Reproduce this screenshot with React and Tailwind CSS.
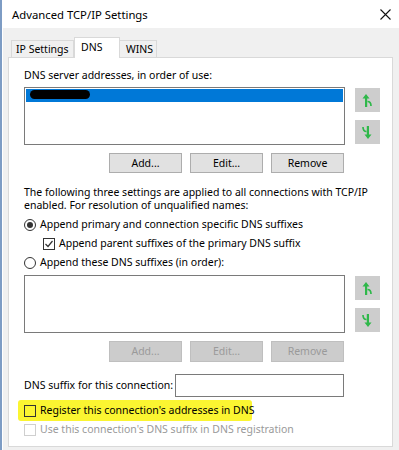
import React from "react";

const font = { fontFamily: '"Noto Sans", "Open Sans", sans-serif' };

function UpIcon() {
  return (
    <svg width="11" height="15" viewBox="0 0 11 15">
      <path d="M4 1 L0.5 5.5 H3 V14 H5.2 V5.5 H7.5 Z" fill="#2fb84a" />
      <path d="M5.5 8.5 Q9 8.5 9 13" stroke="#2fb84a" strokeWidth="1.7" fill="none" />
    </svg>
  );
}

function DownIcon() {
  return (
    <svg width="11" height="15" viewBox="0 0 11 15">
      <path d="M6 14 L2.5 9.5 H4.8 V1 H7 V9.5 H9.5 Z" fill="#2fb84a" />
      <path d="M4.5 6.5 Q1 6.5 1 2" stroke="#2fb84a" strokeWidth="1.7" fill="none" />
    </svg>
  );
}

function ArrowButtons() {
  return (
    <div className="flex flex-col gap-[8px] pt-[1px] shrink-0">
      <div className="w-[25px] h-[24px] bg-[#cdcdcd] flex items-center justify-center">
        <UpIcon />
      </div>
      <div className="w-[25px] h-[24px] bg-[#cdcdcd] flex items-center justify-center">
        <DownIcon />
      </div>
    </div>
  );
}

function Btn({ children, disabled }) {
  return (
    <div
      className={
        disabled
          ? "w-[73px] h-[21px] bg-[#cccccc] border border-[#bfbfbf] flex items-center justify-center text-[#9a9a9a] shrink-0"
          : "w-[73px] h-[20px] bg-[#e1e1e1] border border-[#adadad] flex items-center justify-center text-black shrink-0"
      }
    >
      {children}
    </div>
  );
}

export default function App() {
  return (
    <div
      className="w-[399px] h-[450px] overflow-hidden flex bg-[#f0f0f0] text-[10.5px] leading-[13px] text-black whitespace-nowrap"
      style={font}
    >
      <div className="w-[3px] shrink-0 bg-white border-l-[2px] border-[#7d9cc4]" />
      <div className="flex-1 flex flex-col">
        <div className="h-[28px] bg-white flex items-center justify-between pl-[9px] pr-[8px]">
          <span className="text-[11.3px]">Advanced TCP/IP Settings</span>
          <svg width="11" height="11" viewBox="0 0 11 11">
            <path d="M0.5 0.5 L10.5 10.5 M10.5 0.5 L0.5 10.5" stroke="#111" strokeWidth="1.1" />
          </svg>
        </div>
        <div className="flex items-end pl-[8px] mt-[8px] h-[21px]">
          <div className="h-[17px] w-[63px] pl-[4px] border border-b-0 border-[#d9d9d9] bg-[#f0f0f0] flex items-center shrink-0">
            IP Settings
          </div>
          <div className="h-[21px] w-[46px] pl-[6px] border border-b-0 border-[#d9d9d9] bg-white flex items-start pt-[3px] -mb-[1px] relative shrink-0">
            DNS
          </div>
          <div className="h-[17px] w-[37px] pl-[6px] border border-b-0 border-l-0 border-[#d9d9d9] bg-[#f0f0f0] flex items-center shrink-0">
            WINS
          </div>
        </div>
        <div className="ml-[5px] w-[385px] h-[390px] bg-white border border-[#d9d9d9] pl-[15px] pt-[11px] flex flex-col">
          <div>DNS server addresses, in order of use:</div>
          <div className="flex mt-[5px] gap-[10px]">
            <div className="w-[321px] h-[58px] border border-[#7a7a7a] p-[1px] shrink-0">
              <div className="h-[13px] bg-[#0078d7] flex items-center pl-[4px]">
                <div className="w-[60px] h-[9px] bg-black rounded-full -mt-[2px]" />
              </div>
            </div>
            <ArrowButtons />
          </div>
          <div className="flex gap-[8px] pl-[85px] mt-[8px]">
            <Btn>Add...</Btn>
            <Btn>Edit...</Btn>
            <Btn>Remove</Btn>
          </div>
          <div className="mt-[13px]">
            The following three settings are applied to all connections with TCP/IP
            <br />
            enabled. For resolution of unqualified names:
          </div>
          <div className="flex items-center gap-[4px] mt-[6px]">
            <div className="w-[12px] h-[12px] shrink-0 rounded-full border border-[#333] flex items-center justify-center">
              <div className="w-[6px] h-[6px] rounded-full bg-[#333]" />
            </div>
            <span>Append primary and connection specific DNS suffixes</span>
          </div>
          <div className="flex items-center gap-[4px] mt-[6px] pl-[19px]">
            <div className="w-[12px] h-[12px] shrink-0 border border-[#333] flex items-center justify-center">
              <svg width="10" height="10" viewBox="0 0 10 10">
                <path d="M1.5 5 L4 7.5 L8.5 2" stroke="#333" strokeWidth="1.2" fill="none" />
              </svg>
            </div>
            <span>Append parent suffixes of the primary DNS suffix</span>
          </div>
          <div className="flex items-center gap-[4px] mt-[6px]">
            <div className="w-[12px] h-[12px] shrink-0 rounded-full border border-[#333]" />
            <span>Append these DNS suffixes (in order):</span>
          </div>
          <div className="flex mt-[6px] gap-[10px]">
            <div className="w-[321px] h-[58px] border border-[#7a7a7a] shrink-0" />
            <ArrowButtons />
          </div>
          <div className="flex gap-[8px] pl-[85px] mt-[8px]">
            <Btn disabled>Add...</Btn>
            <Btn disabled>Edit...</Btn>
            <Btn disabled>Remove</Btn>
          </div>
          <div className="flex items-center mt-[12px]">
            <span>DNS suffix for this connection:</span>
            <div className="w-[169px] h-[23px] border border-[#7a7a7a] bg-white ml-auto mr-[48px] shrink-0" />
          </div>
          <div className="flex items-center gap-[4px] mt-[3px] -ml-[6px] pl-[6px] w-[234px] h-[21px] bg-[#fbf531] rounded-[3px]">
            <div className="w-[12px] h-[12px] shrink-0 border border-[#333]" />
            <span>Register this connection's addresses in DNS</span>
          </div>
          <div className="flex items-center gap-[4px] mt-[2px] text-[#9a9a9a]">
            <div className="w-[12px] h-[12px] shrink-0 border border-[#cfcfcf]" />
            <span>Use this connection's DNS suffix in DNS registration</span>
          </div>
        </div>
      </div>
    </div>
  );
}
